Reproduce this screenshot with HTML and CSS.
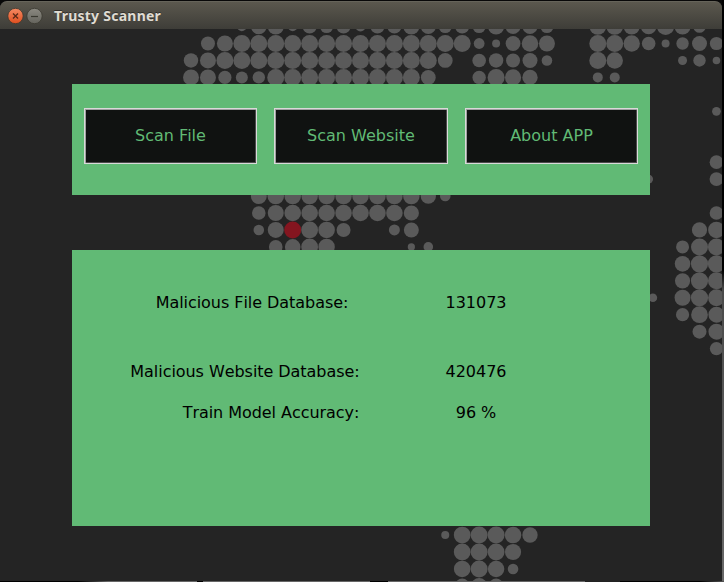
FILE: index.html
```html
<!DOCTYPE html>
<html lang="en">
<head>
<meta charset="utf-8">
<title>Trusty Scanner</title>
<link rel="stylesheet" href="styles.css">
</head>
<body>
<div class="window">
  <header class="titlebar">
    <svg class="controls" width="40" height="20" viewBox="0 0 40 20">
      <defs>
        <linearGradient id="close-fill" x1="0" y1="0" x2="0" y2="1"><stop offset="0" stop-color="#f58a63"/><stop offset="1" stop-color="#df4e1e"/></linearGradient>
        <linearGradient id="min-fill" x1="0" y1="0" x2="0" y2="1"><stop offset="0" stop-color="#8b8981"/><stop offset="1" stop-color="#65645d"/></linearGradient>
      </defs>
      <circle cx="10.5" cy="10" r="7.7" fill="url(#close-fill)" stroke="#38372f" stroke-width=".8"/>
      <path d="M8 7.5l5 5M13 7.5l-5 5" stroke="#5b2a17" stroke-width="1.4"/>
      <circle cx="29.5" cy="10" r="7.7" fill="url(#min-fill)" stroke="#38372f" stroke-width=".8"/>
      <path d="M26 10.5h7" stroke="#393830" stroke-width="1.2"/>
    </svg>
    <h1 class="title">Trusty Scanner</h1>
  </header>
  <main class="content">
    <svg class="map" id="map" width="722" height="552" viewBox="0 29 722 552"></svg>
    <nav class="panel actions">
      <button class="action">Scan File</button>
      <button class="action">Scan Website</button>
      <button class="action">About APP</button>
    </nav>
    <section class="panel stats">
      <div class="stat stat-file"><span class="label">Malicious File Database:</span><span class="value">131073</span></div>
      <div class="stat stat-site"><span class="label">Malicious Website Database:</span><span class="value">420476</span></div>
      <div class="stat stat-model"><span class="label">Train Model Accuracy:</span><span class="value">96 %</span></div>
    </section>
  </main>
</div>
<script src="map.js"></script>
</body>
</html>
```
FILE: styles.css
```css
* { box-sizing: border-box; }

body {
  margin: 0;
  width: 724px;
  height: 582px;
  overflow: hidden;
  padding: 1px 2px 1px 0;
  background:
    linear-gradient(90deg, #000 0 78px, #333 95px, #666 108px 197px, #000 197px 203px, #666 203px 370px, #000 370px 388px, #666 388px 585px, #222 585px 620px, #000 620px 700px, #555 724px) 0 581px / 724px 1px no-repeat,
    linear-gradient(#000 0 270px, #4a4a4a 290px, #555 400px, #686868 582px) 722px 0 / 2px 581px no-repeat,
    #080808;
  font-family: "DejaVu Sans", sans-serif;
}

.window {
  display: flex;
  flex-direction: column;
  width: 722px;
  height: 580px;
}

.titlebar {
  display: flex;
  align-items: center;
  flex: 0 0 28px;
  padding: 1px 5px 0;
  border-top: 1px solid #66645a;
  border-radius: 7px 7px 0 0;
  background: linear-gradient(#5b584e, #3e3d38);
}

.controls { display: block; }

.title {
  margin: 0 0 0 9px;
  color: #dfdbd2;
  font: bold 14px/20px "Noto Sans", sans-serif;
  letter-spacing: 0.25px;
  text-shadow: 0 -1px #302f2b;
}

.content {
  position: relative;
  display: flex;
  flex: 1;
  flex-direction: column;
  gap: 55px;
  padding: 55px 72px;
  background: #242424;
}

.map {
  position: absolute;
  inset: 0;
  fill: #5a5a5a;
}

.map .marker { fill: #84151f; }

.panel {
  position: relative;
  width: 578px;
  background: #61ba75;
}

.actions {
  display: grid;
  grid-template-columns: 173px 174px 173px;
  gap: 17px;
  flex: 0 0 111px;
  padding: 24px 12px 31px;
}

.action {
  padding: 0;
  border: 1px solid #d9d9d9;
  background: #101211;
  box-shadow: inset 1px 1px #a0a0a0, inset -1px -1px #4b4b4b;
  color: #61ba75;
  font: 16px/20px "DejaVu Sans", sans-serif;
}

.stats {
  flex: 0 0 276px;
  padding-top: 43px;
}

.stat {
  display: grid;
  grid-template-columns: 360px 88px;
  height: 20px;
  color: #000;
  font-size: 16px;
  font-kerning: none;
  letter-spacing: -0.05px;
  line-height: 20px;
}

.label,
.value { text-align: center; white-space: nowrap; }

.stat-file { margin-bottom: 49px; }
.stat-site { margin-bottom: 21px; }
.stat-site .label { padding-right: 14px; }
.stat-model .label { padding-left: 38px; }
```
FILE: map.js
```js
// Dotted world map: each run is [row, first column, radii...].
const PITCH = 16.95, ORIGIN_X = 191, ORIGIN_Y = 43.5;
const fill = (count, radius) => Array(count).fill(radius);
const runs = [
  [-1, 3, 4.7, 7.8, 8, 4.7, 7, 6.5, 7, 5, 7, 7, 8, 7.5, 6.5, 7, 6.5, 8, 7.5, 7.5, 6.5],
  [-1, 24, 8.3, 8.3, 8, 7.8, 8.5, 8, 6.3],
  [0, 1, 7, 8, ...fill(14, 8.5), 5.4, 4, 7.4, 8.3, 8],
  [0, 24, 8.5, 8.5, 8.2, 6.8, 4, 6.2, 7.5, 6.6],
  [1, 0, 7.2, 8, ...fill(13, 8.5), 7.4],
  [1, 17, 6.8, 7.2, 7, 7.5, 5.3],
  [1, 24, 8.5, 8.2],
  [1, 29, 4.5, 6.2, 3.8],
  [2, 0, 8, 8, 6.6, 6, 6.2, ...fill(9, 8.5), 7.4],
  [2, 17, 6.7, 8.5, 8.1, 7.7],
  [2, 24, 5, 5],
  [4, 31, 4.4],
  [7, 31, 6.8],
  [8, 27, 4.4],
  [8, 31, 6.9],
  [9, 4, 8, ...fill(9, 8.3), 7.7, 5.3],
  [10, 4, 6.8, 8, ...fill(7, 8.3), 7.6],
  [10, 31, 6.8],
  [11, 4, 5.3, 8, 8.5, 8.4, 8.3, 7],
  [11, 12, 5.5, 7.5],
  [11, 30, 7.6, 8.3],
  [12, 5, 6.8, 7.8, 8.4, 8.2],
  [12, 13, 3.6, 4.8],
  [12, 29, 6.5, 8.5, 8.5],
  [13, 29, 7.8, 8.6, 8.6],
  [14, 29, 7.6, 8.6, 8.5],
  [15, 27.25, 4.3],
  [15, 29, 8, 8.6, 8.4],
  [16, 29, 6.6, 8.4, 8],
  [17, 30, 7, 8],
  [18, 31, 6.6],
  [29, 15, 4, 8.4, 8.5, 8.5, 8.3, 7.7],
  [30, 16, 8.4, 8.5, 8.4, 8.1],
  [31, 16, 8.3, 8.5, 8.2, 5.3],
  [32, 16, 7.3, 8, 7.3]
];
const map = document.getElementById("map");
for (const [row, start, ...radii] of runs) {
  radii.forEach((radius, i) => {
    const dot = document.createElementNS("http://www.w3.org/2000/svg", "circle");
    dot.setAttribute("cx", ORIGIN_X + (start + i) * PITCH);
    dot.setAttribute("cy", ORIGIN_Y + row * PITCH);
    dot.setAttribute("r", radius);
    if (row === 11 && start + i === 6) dot.setAttribute("class", "marker");
    map.append(dot);
  });
}
```
